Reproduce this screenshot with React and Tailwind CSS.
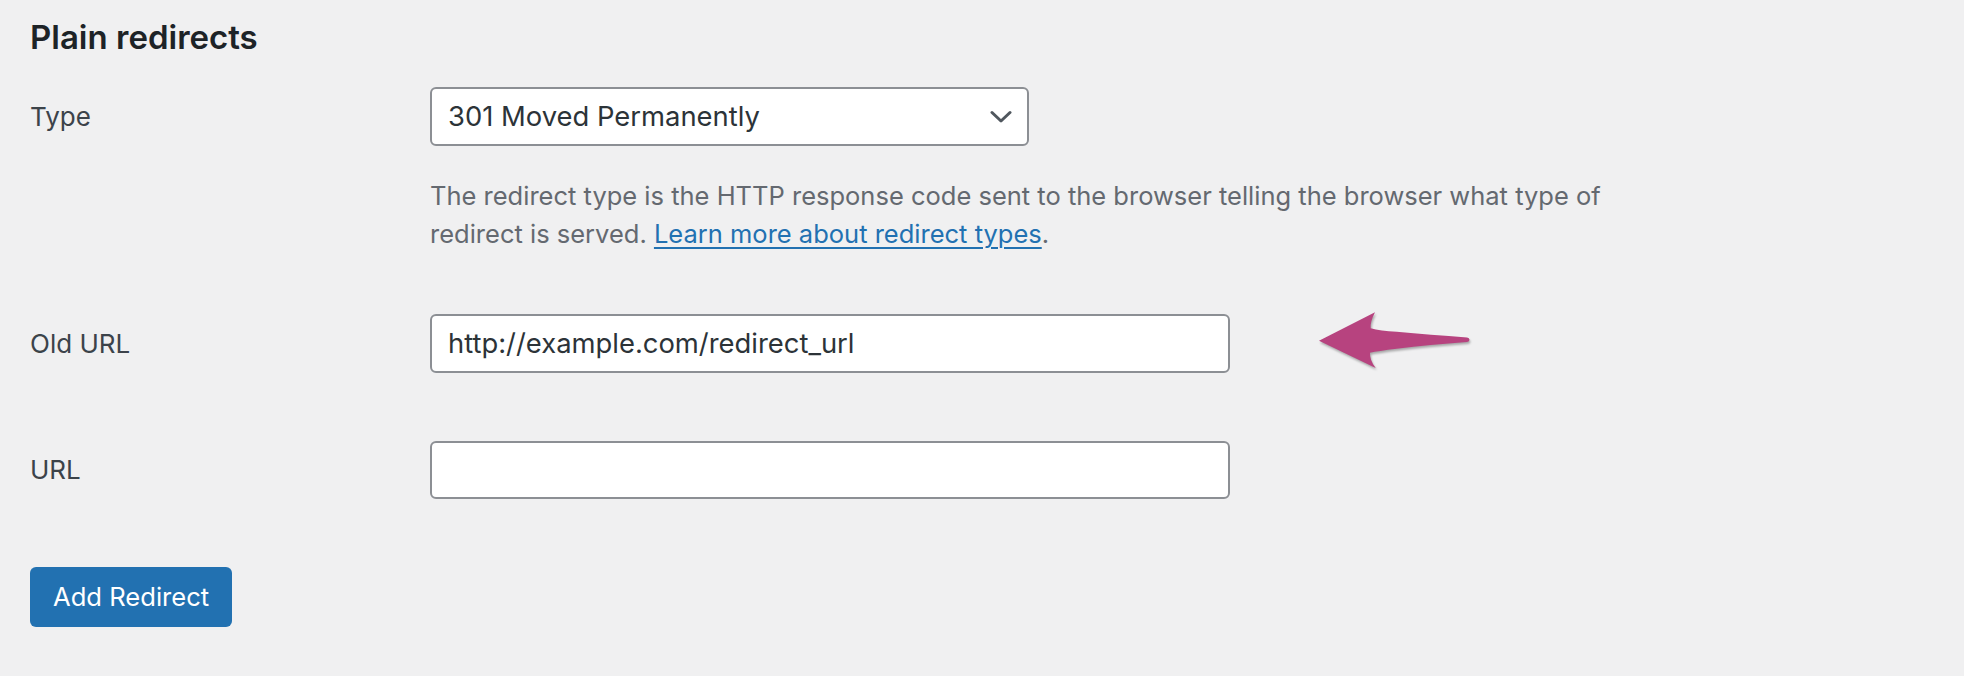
import React from 'react'

const font = { fontFamily: 'Inter, "Noto Sans", "Liberation Sans", sans-serif' }

function Chevron() {
  return (
    <svg width="22" height="14" viewBox="0 0 22 14" className="text-[#50575e]">
      <path d="M2 2.5 L11 11 L20 2.5" fill="none" stroke="currentColor" strokeWidth="3" strokeLinecap="round" strokeLinejoin="round" />
    </svg>
  )
}

function Arrow() {
  return (
    <svg
      width="170"
      height="75"
      viewBox="0 0 170 75"
      className="absolute left-[1310px] top-[305px] drop-shadow-[1px_2px_1px_rgba(0,0,0,0.3)]"
    >
      <path
        d="M9 35.7 L65 7.3 Q60 17 60.7 23.3 Q70 26 86.7 26.7 Q120 29.5 157 32.6 Q159.5 33 159.5 34.8 Q159.5 36.8 157 37 Q120 39.7 86.7 43.7 Q68 46 60 47.7 Q59.5 55 65.7 63 Z"
        fill="#b7437f"
      />
    </svg>
  )
}

function Row({ label, children, className = '' }) {
  return (
    <div className={`flex ${className}`}>
      <div className="flex w-[400px] shrink-0 items-center text-[26px] leading-[38px] text-[#3c434a]">{label}</div>
      {children}
    </div>
  )
}

export default function App() {
  return (
    <div className="relative h-[676px] w-full overflow-hidden bg-[#f0f0f1] pl-[30px]" style={font}>
      <h2 className="pt-[17px] text-[33px] font-semibold leading-[40px] text-[#1d2327]">Plain redirects</h2>

      <div className="mt-[30px] flex">
        <div className="flex h-[59px] w-[400px] shrink-0 items-center text-[26px] text-[#3c434a]">Type</div>
        <div>
          <div className="flex h-[59px] w-[599px] items-center justify-between rounded-[6px] border-2 border-[#8c8f94] bg-white pl-[16px] pr-[15px] text-[27.4px] text-[#2c3338]">
            <span>301 Moved Permanently</span>
            <Chevron />
          </div>
          <p className="mt-[31px] w-[1200px] text-[25.5px] leading-[38px] text-[#646970]">
            The redirect type is the HTTP response code sent to the browser telling the browser what type of
            <br />
            redirect is served.{' '}
            <a href="#" className="text-[#2271b1] underline decoration-[1.5px] underline-offset-[4px]">
              Learn more about redirect types
            </a>
            .
          </p>
        </div>
      </div>

      <Row label="Old URL" className="mt-[61px]">
        <div className="flex h-[59px] w-[800px] items-center rounded-[6px] border-2 border-[#8c8f94] bg-white pl-[16px] text-[27.4px] text-[#2c3338]">
          http://example.com/redirect_url
        </div>
      </Row>

      <Row label="URL" className="mt-[68px]">
        <div className="h-[58px] w-[800px] rounded-[6px] border-2 border-[#8c8f94] bg-white" />
      </Row>

      <button
        type="button"
        className="mt-[68px] flex h-[60px] items-center rounded-[6px] bg-[#2271b1] px-[23px] text-[25.6px] text-white"
      >
        Add Redirect
      </button>

      <Arrow />
    </div>
  )
}
